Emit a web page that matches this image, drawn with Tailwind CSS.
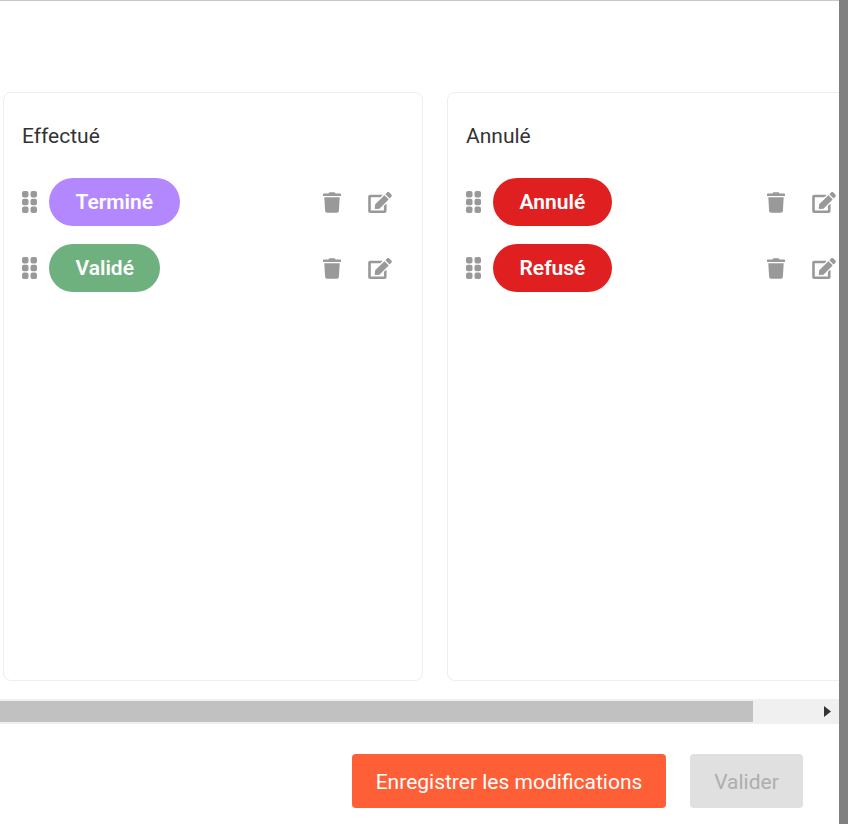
<!DOCTYPE html>
<html lang="fr">
<head>
    <meta charset="UTF-8">
    <meta name="viewport" content="width=device-width, initial-scale=1.0">
    <title>Statuts</title>
    <script src="https://cdn.jsdelivr.net/npm/@tailwindcss/browser@4"></script>
</head>
<body class="bg-white font-['Roboto',sans-serif]">
    <div class="flex h-[824px] w-[848px] overflow-hidden">
        <!-- Main panel -->
        <div class="flex w-[839px] shrink-0 flex-col border-t border-[#c8c8c8]">
            <!-- Columns -->
            <div class="flex gap-6 overflow-hidden pt-[91px] pl-[3px]">
                <div class="h-[589px] w-[420px] shrink-0 rounded-lg border border-[#eeeeee] px-[18px] pt-[29px]">
                    <h3 class="text-[21px] leading-[28px] text-[#333333]">Effectué</h3>
                    <div class="mt-[28px] flex flex-col gap-[18px]">
                        <div class="flex items-center">
                            <svg class="h-[22px] w-[15px] shrink-0" viewBox="0 0 15 22" fill="#999999"><rect width="6.5" height="6.5" rx="2"/><rect x="8.5" width="6.5" height="6.5" rx="2"/><rect y="7.75" width="6.5" height="6.5" rx="2"/><rect x="8.5" y="7.75" width="6.5" height="6.5" rx="2"/><rect y="15.5" width="6.5" height="6.5" rx="2"/><rect x="8.5" y="15.5" width="6.5" height="6.5" rx="2"/></svg>
                            <span class="ml-3 flex h-12 items-center rounded-3xl bg-[#b388ff] px-[26.5px] pt-[2px] text-[21px] font-semibold text-white">Terminé</span>
                            <svg class="ml-auto h-[21px] w-[18px] shrink-0" viewBox="0 0 448 512" fill="#999999"><path d="M432 32H312l-9.4-18.7A24 24 0 0 0 281.1 0H166.8a23.72 23.72 0 0 0-21.4 13.3L136 32H16A16 16 0 0 0 0 48v32a16 16 0 0 0 16 16h416a16 16 0 0 0 16-16V48a16 16 0 0 0-16-16zM53.2 467a48 48 0 0 0 47.9 45h245.8a48 48 0 0 0 47.9-45L416 128H32z"/></svg>
                            <svg class="mr-3 ml-[27px] h-[21px] w-[24px] shrink-0" viewBox="0 0 576 512" fill="#999999"><path d="M402.6 83.2l90.2 90.2c3.8 3.8 3.8 10 0 13.8L274.4 405.6l-92.8 10.3c-12.4 1.4-22.9-9.1-21.5-21.5l10.3-92.8L388.8 83.2c3.8-3.8 10-3.8 13.8 0zm162-22.9l-48.8-48.8c-15.2-15.2-39.9-15.2-55.2 0l-35.4 35.4c-3.8 3.8-3.8 10 0 13.8l90.2 90.2c3.8 3.8 10 3.8 13.8 0l35.4-35.4c15.2-15.3 15.2-40 0-55.2zM384 346.2V448H64V128h229.8c3.2 0 6.2-1.3 8.5-3.5l40-40c7.6-7.6 2.2-20.5-8.5-20.5H48C21.5 64 0 85.5 0 112v352c0 26.5 21.5 48 48 48h352c26.5 0 48-21.5 48-48V306.2c0-10.7-12.9-16-20.5-8.5l-40 40c-2.2 2.3-3.5 5.3-3.5 8.5z"/></svg>
                        </div>
                        <div class="flex items-center">
                            <svg class="h-[22px] w-[15px] shrink-0" viewBox="0 0 15 22" fill="#999999"><rect width="6.5" height="6.5" rx="2"/><rect x="8.5" width="6.5" height="6.5" rx="2"/><rect y="7.75" width="6.5" height="6.5" rx="2"/><rect x="8.5" y="7.75" width="6.5" height="6.5" rx="2"/><rect y="15.5" width="6.5" height="6.5" rx="2"/><rect x="8.5" y="15.5" width="6.5" height="6.5" rx="2"/></svg>
                            <span class="ml-3 flex h-12 items-center rounded-3xl bg-[#6fb07f] px-[26.5px] pt-[2px] text-[21px] font-semibold text-white">Validé</span>
                            <svg class="ml-auto h-[21px] w-[18px] shrink-0" viewBox="0 0 448 512" fill="#999999"><path d="M432 32H312l-9.4-18.7A24 24 0 0 0 281.1 0H166.8a23.72 23.72 0 0 0-21.4 13.3L136 32H16A16 16 0 0 0 0 48v32a16 16 0 0 0 16 16h416a16 16 0 0 0 16-16V48a16 16 0 0 0-16-16zM53.2 467a48 48 0 0 0 47.9 45h245.8a48 48 0 0 0 47.9-45L416 128H32z"/></svg>
                            <svg class="mr-3 ml-[27px] h-[21px] w-[24px] shrink-0" viewBox="0 0 576 512" fill="#999999"><path d="M402.6 83.2l90.2 90.2c3.8 3.8 3.8 10 0 13.8L274.4 405.6l-92.8 10.3c-12.4 1.4-22.9-9.1-21.5-21.5l10.3-92.8L388.8 83.2c3.8-3.8 10-3.8 13.8 0zm162-22.9l-48.8-48.8c-15.2-15.2-39.9-15.2-55.2 0l-35.4 35.4c-3.8 3.8-3.8 10 0 13.8l90.2 90.2c3.8 3.8 10 3.8 13.8 0l35.4-35.4c15.2-15.3 15.2-40 0-55.2zM384 346.2V448H64V128h229.8c3.2 0 6.2-1.3 8.5-3.5l40-40c7.6-7.6 2.2-20.5-8.5-20.5H48C21.5 64 0 85.5 0 112v352c0 26.5 21.5 48 48 48h352c26.5 0 48-21.5 48-48V306.2c0-10.7-12.9-16-20.5-8.5l-40 40c-2.2 2.3-3.5 5.3-3.5 8.5z"/></svg>
                        </div>
                    </div>
                </div>
                <div class="h-[589px] w-[420px] shrink-0 rounded-lg border border-[#eeeeee] px-[18px] pt-[29px]">
                    <h3 class="text-[21px] leading-[28px] text-[#333333]">Annulé</h3>
                    <div class="mt-[28px] flex flex-col gap-[18px]">
                        <div class="flex items-center">
                            <svg class="h-[22px] w-[15px] shrink-0" viewBox="0 0 15 22" fill="#999999"><rect width="6.5" height="6.5" rx="2"/><rect x="8.5" width="6.5" height="6.5" rx="2"/><rect y="7.75" width="6.5" height="6.5" rx="2"/><rect x="8.5" y="7.75" width="6.5" height="6.5" rx="2"/><rect y="15.5" width="6.5" height="6.5" rx="2"/><rect x="8.5" y="15.5" width="6.5" height="6.5" rx="2"/></svg>
                            <span class="ml-3 flex h-12 items-center rounded-3xl bg-[#e02020] px-[26.5px] pt-[2px] text-[21px] font-semibold text-white">Annulé</span>
                            <svg class="ml-auto h-[21px] w-[18px] shrink-0" viewBox="0 0 448 512" fill="#999999"><path d="M432 32H312l-9.4-18.7A24 24 0 0 0 281.1 0H166.8a23.72 23.72 0 0 0-21.4 13.3L136 32H16A16 16 0 0 0 0 48v32a16 16 0 0 0 16 16h416a16 16 0 0 0 16-16V48a16 16 0 0 0-16-16zM53.2 467a48 48 0 0 0 47.9 45h245.8a48 48 0 0 0 47.9-45L416 128H32z"/></svg>
                            <svg class="mr-3 ml-[27px] h-[21px] w-[24px] shrink-0" viewBox="0 0 576 512" fill="#999999"><path d="M402.6 83.2l90.2 90.2c3.8 3.8 3.8 10 0 13.8L274.4 405.6l-92.8 10.3c-12.4 1.4-22.9-9.1-21.5-21.5l10.3-92.8L388.8 83.2c3.8-3.8 10-3.8 13.8 0zm162-22.9l-48.8-48.8c-15.2-15.2-39.9-15.2-55.2 0l-35.4 35.4c-3.8 3.8-3.8 10 0 13.8l90.2 90.2c3.8 3.8 10 3.8 13.8 0l35.4-35.4c15.2-15.3 15.2-40 0-55.2zM384 346.2V448H64V128h229.8c3.2 0 6.2-1.3 8.5-3.5l40-40c7.6-7.6 2.2-20.5-8.5-20.5H48C21.5 64 0 85.5 0 112v352c0 26.5 21.5 48 48 48h352c26.5 0 48-21.5 48-48V306.2c0-10.7-12.9-16-20.5-8.5l-40 40c-2.2 2.3-3.5 5.3-3.5 8.5z"/></svg>
                        </div>
                        <div class="flex items-center">
                            <svg class="h-[22px] w-[15px] shrink-0" viewBox="0 0 15 22" fill="#999999"><rect width="6.5" height="6.5" rx="2"/><rect x="8.5" width="6.5" height="6.5" rx="2"/><rect y="7.75" width="6.5" height="6.5" rx="2"/><rect x="8.5" y="7.75" width="6.5" height="6.5" rx="2"/><rect y="15.5" width="6.5" height="6.5" rx="2"/><rect x="8.5" y="15.5" width="6.5" height="6.5" rx="2"/></svg>
                            <span class="ml-3 flex h-12 items-center rounded-3xl bg-[#e02020] px-[26.5px] pt-[2px] text-[21px] font-semibold text-white">Refusé</span>
                            <svg class="ml-auto h-[21px] w-[18px] shrink-0" viewBox="0 0 448 512" fill="#999999"><path d="M432 32H312l-9.4-18.7A24 24 0 0 0 281.1 0H166.8a23.72 23.72 0 0 0-21.4 13.3L136 32H16A16 16 0 0 0 0 48v32a16 16 0 0 0 16 16h416a16 16 0 0 0 16-16V48a16 16 0 0 0-16-16zM53.2 467a48 48 0 0 0 47.9 45h245.8a48 48 0 0 0 47.9-45L416 128H32z"/></svg>
                            <svg class="mr-3 ml-[27px] h-[21px] w-[24px] shrink-0" viewBox="0 0 576 512" fill="#999999"><path d="M402.6 83.2l90.2 90.2c3.8 3.8 3.8 10 0 13.8L274.4 405.6l-92.8 10.3c-12.4 1.4-22.9-9.1-21.5-21.5l10.3-92.8L388.8 83.2c3.8-3.8 10-3.8 13.8 0zm162-22.9l-48.8-48.8c-15.2-15.2-39.9-15.2-55.2 0l-35.4 35.4c-3.8 3.8-3.8 10 0 13.8l90.2 90.2c3.8 3.8 10 3.8 13.8 0l35.4-35.4c15.2-15.3 15.2-40 0-55.2zM384 346.2V448H64V128h229.8c3.2 0 6.2-1.3 8.5-3.5l40-40c7.6-7.6 2.2-20.5-8.5-20.5H48C21.5 64 0 85.5 0 112v352c0 26.5 21.5 48 48 48h352c26.5 0 48-21.5 48-48V306.2c0-10.7-12.9-16-20.5-8.5l-40 40c-2.2 2.3-3.5 5.3-3.5 8.5z"/></svg>
                        </div>
                    </div>
                </div>
            </div>
            <!-- Horizontal scrollbar -->
            <div class="mt-[18px] flex h-[25px] items-center bg-[#f0f0f0]">
                <div class="h-[21px] w-[753px] bg-[#c1c1c1]"></div>
                <svg class="ml-auto mr-[8px] h-[11px] w-[7px]" viewBox="0 0 7 11" fill="#333333"><path d="M0 0l7 5.5L0 11z"/></svg>
            </div>
            <!-- Footer -->
            <div class="flex justify-end gap-6 pt-[30px] pr-9">
                <button class="h-[54px] w-[314px] rounded bg-[#ff5f36] pt-1 text-[21px] text-white">Enregistrer les modifications</button>
                <button class="h-[54px] w-[113px] rounded bg-[#e0e0e0] pt-1 text-[21px] text-[#aeaeae]">Valider</button>
            </div>
        </div>
        <!-- Backdrop edge -->
        <div class="w-[9px] shrink-0 bg-[#808080]"></div>
    </div>
</body>
</html>
